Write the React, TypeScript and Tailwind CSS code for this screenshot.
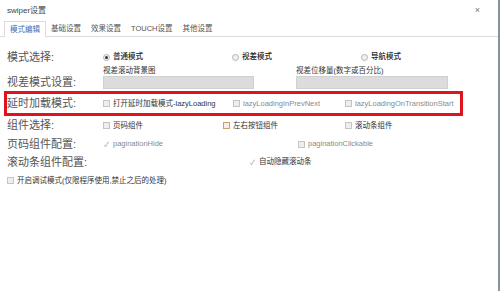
import React from 'react';

function Radio({ checked, label }: { checked?: boolean; label: string }) {
  return (
    <span className="flex items-center gap-[3px]">
      <span className="w-[7px] h-[7px] rounded-full border border-[#b5b5b5] bg-[#f0f0f0] flex items-center justify-center">
        {checked && <span className="w-[3px] h-[3px] rounded-full bg-[#333]" />}
      </span>
      <span className="text-[7.5px] text-[#222] font-medium">{label}</span>
    </span>
  );
}

function Check({
  label,
  checked,
  muted,
  accent,
}: {
  label: string;
  checked?: boolean;
  muted?: boolean;
  accent?: boolean;
}) {
  return (
    <span className="flex items-center gap-[3px]">
      <span
        className={
          accent
            ? 'w-[7px] h-[7px] border border-[#c9a06a] bg-[#f3eee6] flex items-center justify-center'
            : checked
              ? 'w-[7px] h-[7px] flex items-center justify-center'
              : 'w-[7px] h-[7px] border border-[#c4c4c4] bg-[#eeeeee] flex items-center justify-center'
        }
      >
        {checked && <span className="text-[7px] leading-none text-[#9a9a9a]">✓</span>}
      </span>
      <span className={muted ? 'text-[7.5px] text-[#8a8a8a]' : 'text-[7.5px] text-[#333]'}>{label}</span>
    </span>
  );
}

function Label({ children }: { children: React.ReactNode }) {
  return <div className="w-[96px] shrink-0 text-[11px] text-[#555]">{children}</div>;
}

export default function App() {
  return (
    <div className="w-[500px] h-[291px] bg-white border-r-2 border-[#87939a] font-['Liberation_Sans','Noto_Sans_CJK_SC',sans-serif] overflow-hidden">
      {/* header */}
      <div className="h-[21px] flex items-center justify-between pl-[7px] pr-[18px]">
        <span className="text-[8px] text-[#444]">swiper设置</span>
        <span className="text-[9px] text-[#777]">×</span>
      </div>

      {/* tabs */}
      <div className="flex pl-[4px] border-b border-[#dcdcdc] h-[16px]">
        <div className="px-[5px] flex items-center border border-b-0 border-[#dcdcdc] bg-white text-[7.5px] text-[#3b6fb6] -mb-px">
          模式编辑
        </div>
        <div className="px-[5px] flex items-center text-[7.5px] text-[#555]">基础设置</div>
        <div className="px-[5px] flex items-center text-[7.5px] text-[#555]">效果设置</div>
        <div className="px-[5px] flex items-center text-[7.5px] text-[#555]">TOUCH设置</div>
        <div className="px-[5px] flex items-center text-[7.5px] text-[#555]">其他设置</div>
      </div>

      {/* body */}
      <div className="pl-[4px] pt-[12px]">
        <div className="flex items-center h-[16px] pl-[3px]">
          <Label>模式选择:</Label>
          <div className="w-[129px]"><Radio checked label="普通模式" /></div>
          <div className="w-[129px]"><Radio label="视差模式" /></div>
          <Radio label="导航模式" />
        </div>

        <div className="flex h-[26px] pl-[3px]">
          <div className="pt-[9px]"><Label>视差模式设置:</Label></div>
          <div className="w-[193px] flex flex-col">
            <span className="text-[7.5px] text-[#333] h-[11px] leading-[11px]">视差滚动背景图</span>
            <div className="w-[151px] h-[13px] bg-[#dcdcdc] border border-[#d0d0d0]" />
          </div>
          <div className="flex flex-col">
            <span className="text-[7.5px] text-[#333] h-[11px] leading-[11px]">视差位移量(数字或百分比)</span>
            <div className="w-[152px] h-[13px] bg-[#dcdcdc] border border-[#d0d0d0]" />
          </div>
        </div>

        <div className="flex items-center w-[459px] h-[25px] border-[3px] border-[#e0121b]">
          <Label>延时加载模式:</Label>
          <div className="w-[130px]"><Check label="打开延时加载模式-lazyLoading" /></div>
          <div className="w-[112px]"><Check muted label="lazyLoadingInPrevNext" /></div>
          <Check muted label="lazyLoadingOnTransitionStart" />
        </div>

        <div className="flex items-center h-[19px] pl-[3px]">
          <Label>组件选择:</Label>
          <div className="w-[120px]"><Check label="页码组件" /></div>
          <div className="w-[122px]"><Check accent label="左右按钮组件" /></div>
          <Check label="滚动条组件" />
        </div>

        <div className="flex items-center h-[18px] pl-[3px]">
          <Label>页码组件配置:</Label>
          <div className="w-[195px]"><Check checked muted label="paginationHide" /></div>
          <Check muted label="paginationClickable" />
        </div>

        <div className="flex items-center h-[18px] pl-[3px]">
          <Label>滚动条组件配置:</Label>
          <div className="w-[146px]" />
          <Check checked label="自动隐藏滚动条" />
        </div>

        <div className="flex items-center h-[19px] pl-[3px]">
          <Check label="开启调试模式(仅限程序使用,禁止之后的处理)" />
        </div>
      </div>
    </div>
  );
}
